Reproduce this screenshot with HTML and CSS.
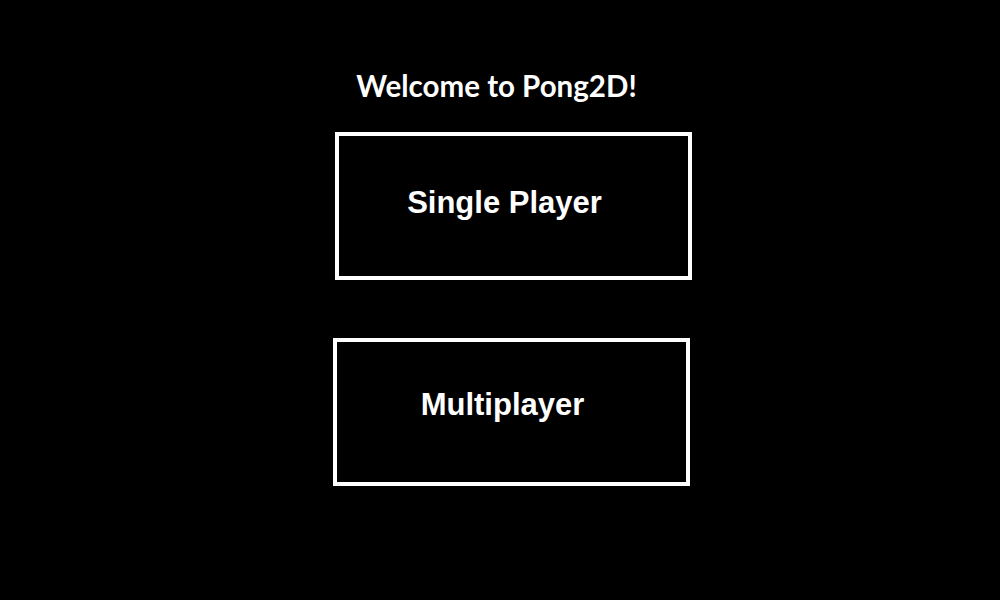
FILE: index.html
```html
<!DOCTYPE html>
<html lang="en">
<head>
<meta charset="utf-8">
<title>Pong2D</title>
<link rel="stylesheet" href="styles.css">
</head>
<body>
<main class="menu">
  <h1 class="title">Welcome to Pong2D!</h1>
  <div class="buttons">
    <button class="mode-btn single">Single Player</button>
    <button class="mode-btn multi">Multiplayer</button>
  </div>
</main>
</body>
</html>
```
FILE: styles.css
```css
html, body {
  margin: 0;
  padding: 0;
  background: #000;
  width: 1000px;
  height: 600px;
  overflow: hidden;
}

.menu {
  display: flex;
  flex-direction: column;
  align-items: center;
  padding-top: 66px;
}

.title {
  margin: 0 7px 0 0;
  font-family: "Lato", "Open Sans", sans-serif;
  font-weight: 700;
  font-size: 29.5px;
  line-height: 40px;
  color: #fff;
}

.buttons {
  display: flex;
  flex-direction: column;
  align-items: flex-start;
  gap: 58px;
  margin-top: 26px;
  padding-left: 25px;
}

.mode-btn {
  box-sizing: border-box;
  width: 357px;
  height: 148px;
  border: 4px solid #fff;
  background: #000;
  color: #fff;
  font-family: "Liberation Sans", Arial, sans-serif;
  font-weight: 700;
  font-size: 31px;
  padding: 0 18px 12px 0;
  display: flex;
  align-items: center;
  justify-content: center;
  cursor: pointer;
}

.mode-btn.single {
  margin-left: 2px;
  padding-bottom: 6px;
}

.mode-btn.multi {
  padding-bottom: 14px;
}
```
